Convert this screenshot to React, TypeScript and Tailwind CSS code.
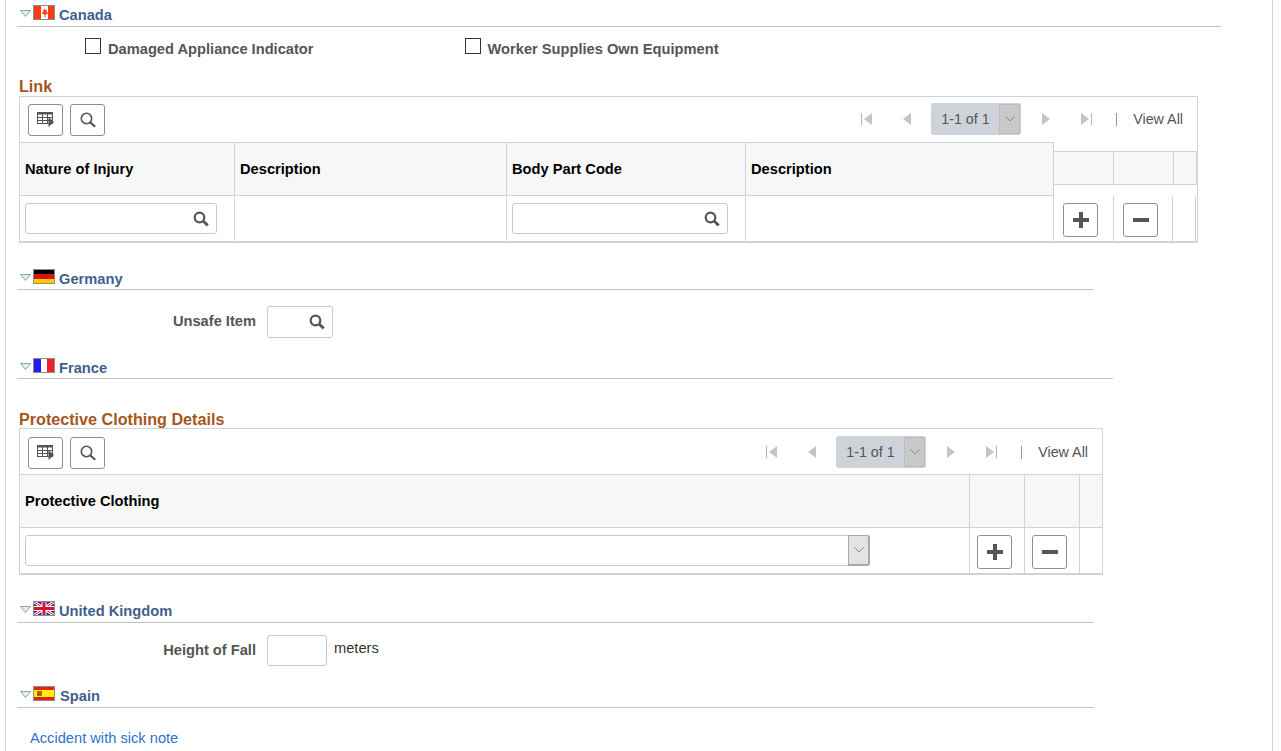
import React from "react";

const SearchIcon = () => (
  <svg viewBox="0 0 16 16" className="w-[16px] h-[16px]" fill="none" stroke="#555555">
    <circle cx="6.5" cy="6.5" r="4.8" strokeWidth="2.2" />
    <path d="M10 10l4.8 4.4" strokeWidth="2.8" />
  </svg>
);

const ThinSearchIcon = () => (
  <svg viewBox="0 0 16 16" className="w-[16px] h-[16px]" fill="none" stroke="#555555">
    <circle cx="6.5" cy="6.5" r="5.2" strokeWidth="1.6" />
    <path d="M10.2 10.2l5 4.6" strokeWidth="2.2" />
  </svg>
);

const GridIcon = () => (
  <svg viewBox="0 0 18 16" className="w-[18px] h-[16px]" fill="none">
    <rect x="0.5" y="0.5" width="15" height="11" fill="#ffffff" stroke="#555555" />
    <path d="M0 1.5h16" stroke="#555555" strokeWidth="2" />
    <path d="M0 5.5h16M0 8.5h16M5.5 2v9M10.5 2v9" stroke="#555555" />
    <path d="M11.5 5l5.5 5-5.5 5z" fill="#555555" />
  </svg>
);

const Twisty = () => (
  <svg viewBox="0 0 11 7" className="w-[11px] h-[7px]">
    <path d="M0.5 0.5h10L5.5 6.5z" fill="#e3eef2" stroke="#8aa5b5" />
  </svg>
);

const FlagFrame = ({ children }: { children: React.ReactNode }) => (
  <svg viewBox="0 0 22 15" className="w-[22px] h-[15px] block">
    {children}
    <rect x="0.5" y="0.5" width="21" height="14" fill="none" stroke="#8d8d8d" />
  </svg>
);

const flags: Record<string, React.ReactNode> = {
  canada: (
    <FlagFrame>
      <rect width="22" height="15" fill="#ffffff" />
      <rect width="8" height="15" fill="#f93a0e" />
      <rect x="15" width="7" height="15" fill="#f93a0e" />
      <path d="M11.5 3l1 2 1.5-.5-.5 3 1.5-.5-.5 2-2 .5V12h-1V9.5l-2-.5-.5-2 1.5.5-.5-3 1.5.5z" fill="#f93a0e" />
    </FlagFrame>
  ),
  germany: (
    <FlagFrame>
      <rect width="22" height="5" fill="#000000" />
      <rect y="5" width="22" height="5" fill="#e01010" />
      <rect y="10" width="22" height="5" fill="#ffcc00" />
    </FlagFrame>
  ),
  france: (
    <FlagFrame>
      <rect width="22" height="15" fill="#ffffff" />
      <rect width="8" height="15" fill="#2020e8" />
      <rect x="14" width="8" height="15" fill="#f02030" />
    </FlagFrame>
  ),
  uk: (
    <FlagFrame>
      <rect width="22" height="15" fill="#2a2fa8" />
      <path d="M0 0l22 15M22 0L0 15" stroke="#ffffff" strokeWidth="3" />
      <path d="M0 0l22 15M22 0L0 15" stroke="#e01030" strokeWidth="1" />
      <path d="M11 0v15M0 7.5h22" stroke="#ffffff" strokeWidth="5" />
      <path d="M11 0v15M0 7.5h22" stroke="#e01030" strokeWidth="3" />
    </FlagFrame>
  ),
  spain: (
    <FlagFrame>
      <rect width="22" height="15" fill="#e8200c" />
      <rect y="4" width="22" height="7" fill="#fff000" />
      <rect x="4" y="5" width="5" height="5" fill="#a86a20" />
      <rect x="5" y="6" width="1" height="3" fill="#c02010" />
    </FlagFrame>
  ),
};

const SectionHeader = ({
  flag,
  label,
  className,
  textClass = "ml-[4px]",
}: {
  flag: string;
  label: string;
  className: string;
  textClass?: string;
}) => (
  <div className={`h-[27px] ml-[11px] border-b border-[#c2c2c2] flex items-start ${className}`}>
    <div className="ml-[3px] mt-[10px]">
      <Twisty />
    </div>
    <div className="ml-[2px] mt-[5px]">{flags[flag]}</div>
    <span className={`${textClass} mt-[7px] text-[14.67px] leading-[16px] font-bold text-[#3f5f8f]`}>{label}</span>
  </div>
);

const IconButton = ({ children }: { children: React.ReactNode }) => (
  <button className="w-[35px] h-[32px] bg-white border border-[#8e8e8e] rounded-[3px] flex items-center justify-center">
    {children}
  </button>
);

const PagerArrow = ({ dir, bar }: { dir: "l" | "r"; bar?: boolean }) => (
  <svg viewBox="0 0 12 14" className="w-[12px] h-[14px]">
    {dir === "l" ? (
      <>
        {bar && <rect x="0" y="1" width="1" height="12" fill="#b5b5b5" />}
        <path d={bar ? "M11 1v12L3 7z" : "M10 1v12L2 7z"} fill="#c4c4c4" />
      </>
    ) : (
      <>
        {bar && <rect x="11" y="1" width="1" height="12" fill="#b5b5b5" />}
        <path d={bar ? "M1 1v12l8-6z" : "M2 1v12l8-6z"} fill="#c4c4c4" />
      </>
    )}
  </svg>
);

const Chevron = () => (
  <svg viewBox="0 0 10 6" className="w-[10px] h-[6px]" fill="none" stroke="#8a8a8a">
    <path d="M0.5 0.5L5 5l4.5-4.5" />
  </svg>
);

const Toolbar = ({ sepClass, offsetClass }: { sepClass: string; offsetClass: string }) => (
  <div className={`h-[45px] flex items-start ${offsetClass}`}>
    <div className="ml-[8px] mt-[7px] flex gap-[7px]">
      <IconButton>
        <GridIcon />
      </IconButton>
      <IconButton>
        <ThinSearchIcon />
      </IconButton>
    </div>
    <div className="ml-auto mt-[6px] mr-[14px] h-[32px] flex items-center">
      <PagerArrow dir="l" bar />
      <div className="w-[28px]" />
      <PagerArrow dir="l" />
      <div className="w-[18px]" />
      <div className="w-[90px] h-[32px] bg-[#ced3da] rounded-[3px] flex items-center">
        <span className="ml-[10px] mt-[1px] text-[14.3px] text-[#555555]">1-1 of 1</span>
        <div className="ml-auto mr-[1px] w-[21px] h-[30px] bg-[#c9c9c9] border border-[#bcbcbc] flex items-center justify-center">
          <Chevron />
        </div>
      </div>
      <div className="w-[19px]" />
      <PagerArrow dir="r" />
      <div className="w-[28px]" />
      <PagerArrow dir="r" bar />
      <div className={`ml-[24px] mr-[16px] w-px h-[13px] ${sepClass}`} />
      <span className="mt-[1px] text-[14.3px] text-[#555555]">View All</span>
    </div>
  </div>
);

const RowButton = ({ kind }: { kind: "add" | "del" }) => (
  <button className="w-[35px] h-[34px] bg-white border border-[#8e8e8e] rounded-[3px] flex items-center justify-center">
    <svg viewBox="0 0 16 16" className="w-[16px] h-[16px]" fill="#555555">
      {kind === "add" ? <path d="M6 0h4v6h6v4h-6v6H6v-6H0V6h6z" /> : <rect x="0" y="6" width="16" height="4" />}
    </svg>
  </button>
);

const HeadCell = ({ label, className }: { label: string; className: string }) => (
  <div className={`h-full border-r border-[#cfd3da] flex items-center pl-[5px] text-[14.67px] font-bold text-black ${className}`}>
    {label}
  </div>
);

const LookupInput = ({ className }: { className: string }) => (
  <div className={`h-[31px] bg-white border border-[#c4c8d0] rounded-[3px] flex items-center justify-end pr-[7px] ${className}`}>
    <SearchIcon />
  </div>
);

export default function App() {
  return (
    <div className="h-[751px] w-[1281px] overflow-hidden bg-white font-['Liberation_Sans',Arial,sans-serif]">
      <div className="h-full w-[1268px] ml-[5px] border-x border-[#d0d3da] overflow-hidden">
        <SectionHeader flag="canada" label="Canada" className="w-[1204px]" />

        <div className="h-[44px] flex items-start">
          <div className="ml-[79px] mt-[11px] w-[16px] h-[16px] border border-[#333333] bg-white" />
          <span className="ml-[7px] mt-[14px] text-[14.67px] leading-[16px] font-bold text-[#555555]">Damaged Appliance Indicator</span>
          <div className="ml-[151px] mt-[11px] w-[16px] h-[16px] border border-[#333333] bg-white" />
          <span className="ml-[7px] mt-[14px] text-[14.67px] leading-[16px] font-bold text-[#555555]">Worker Supplies Own Equipment</span>
        </div>

        <div className="h-[25px] ml-[13px] flex items-end pb-[1px]">
          <span className="text-[16.15px] leading-[18px] font-bold text-[#a5561c]">Link</span>
        </div>

        {/* Link grid */}
        <div className="ml-[13px] w-[1179px] h-[147px] border border-[#cfd3da] border-b-2">
          <Toolbar sepClass="bg-[#9a8fc0]" offsetClass="" />
          <div className="flex h-[99px]">
            <div className="w-[1034px] shrink-0">
              <div className="h-[54px] flex bg-[#f7f7f7] border-y border-r border-[#cfd3da]">
                <HeadCell label="Nature of Injury" className="w-[215px]" />
                <HeadCell label="Description" className="w-[272px]" />
                <HeadCell label="Body Part Code" className="w-[239px]" />
                <div className="flex-1 flex items-center pl-[5px] text-[14.67px] font-bold text-black">Description</div>
              </div>
              <div className="h-[45px] flex border-r border-[#cfd3da]">
                <div className="w-[215px] border-r border-[#cfd3da] pl-[5px] pt-[7px]">
                  <LookupInput className="w-[192px]" />
                </div>
                <div className="w-[272px] border-r border-[#cfd3da]" />
                <div className="w-[239px] border-r border-[#cfd3da] pl-[5px] pt-[7px]">
                  <LookupInput className="w-[216px]" />
                </div>
              </div>
            </div>
            <div className="flex-1 min-w-0">
              <div className="h-[34px] mt-[9px] flex bg-[#f7f7f7] border-y border-[#cfd3da]">
                <div className="w-[60px] border-r border-[#cfd3da]" />
                <div className="w-[60px] border-r border-[#cfd3da]" />
                <div className="w-[23px] border-r border-[#cfd3da]" />
              </div>
              <div className="h-[45px] mt-[11px] flex">
                <div className="w-[60px] border-r border-[#cfd3da] pl-[9px] pt-[7px]">
                  <RowButton kind="add" />
                </div>
                <div className="w-[59px] border-r border-[#cfd3da] pl-[9px] pt-[7px]">
                  <RowButton kind="del" />
                </div>
                <div className="w-[23px] border-r border-[#cfd3da]" />
              </div>
            </div>
          </div>
        </div>

        <div className="h-[20px]" />
        <SectionHeader flag="germany" label="Germany" className="w-[1077px] pt-[1px]" />
        <div className="h-[62px] flex items-start">
          <span className="mt-[23px] w-[250px] text-right text-[14.67px] leading-[16px] font-bold text-[#555555]">Unsafe Item</span>
          <div className="ml-[11px] mt-[16px] w-[66px] h-[32px] border border-[#c4c8d0] rounded-[3px] flex items-center justify-end pr-[7px]">
            <SearchIcon />
          </div>
        </div>
        <SectionHeader flag="france" label="France" className="w-[1096px] pt-[1px]" />

        <div className="h-[49px] ml-[13px] flex items-end pb-[1px]">
          <span className="text-[16.15px] leading-[16px] font-bold text-[#a5561c]">Protective Clothing Details</span>
        </div>

        {/* Protective clothing grid */}
        <div className="ml-[13px] w-[1084px] h-[147px] border border-[#cfd3da] border-b-2">
          <Toolbar sepClass="bg-[#a09a80]" offsetClass="pt-[1px]" />
          <div className="h-[54px] flex bg-[#f7f7f7] border-y border-[#cfd3da]">
            <HeadCell label="Protective Clothing" className="w-[950px]" />
            <div className="w-[55px] border-r border-[#cfd3da]" />
            <div className="w-[55px] border-r border-[#cfd3da]" />
            <div className="flex-1" />
          </div>
          <div className="h-[45px] flex">
            <div className="w-[950px] border-r border-[#cfd3da] pl-[5px] pt-[7px]">
              <div className="w-[845px] h-[31px] border border-[#c4c8d0] rounded-[3px] flex justify-end">
                <div className="w-[22px] h-[31px] -mt-px -mr-px bg-[#e2e3e4] border border-[#a8a8a8] border-r-2 border-b-2 rounded-r-[3px] flex items-center justify-center">
                  <Chevron />
                </div>
              </div>
            </div>
            <div className="w-[55px] border-r border-[#cfd3da] pl-[7px] pt-[7px]">
              <RowButton kind="add" />
            </div>
            <div className="w-[55px] border-r border-[#cfd3da] pl-[7px] pt-[7px]">
              <RowButton kind="del" />
            </div>
          </div>
        </div>

        <div className="h-[21px]" />
        <SectionHeader flag="uk" label="United Kingdom" className="w-[1077px]" />
        <div className="h-[58px] flex items-start">
          <span className="mt-[19px] w-[250px] text-right text-[14.67px] leading-[16px] font-bold text-[#555555]">Height of Fall</span>
          <div className="ml-[11px] mt-[12px] w-[60px] h-[31px] border border-[#c4c8d0] rounded-[3px]" />
          <span className="ml-[7px] mt-[17px] text-[14.67px] leading-[16px] text-[#333333]">meters</span>
        </div>
        <SectionHeader flag="spain" label="Spain" className="w-[1077px]" textClass="ml-[5px]" />
        <div className="ml-[24px] mt-[22px] text-[14.67px] leading-[16px] text-[#2f73c9]">Accident with sick note</div>
      </div>
    </div>
  );
}
